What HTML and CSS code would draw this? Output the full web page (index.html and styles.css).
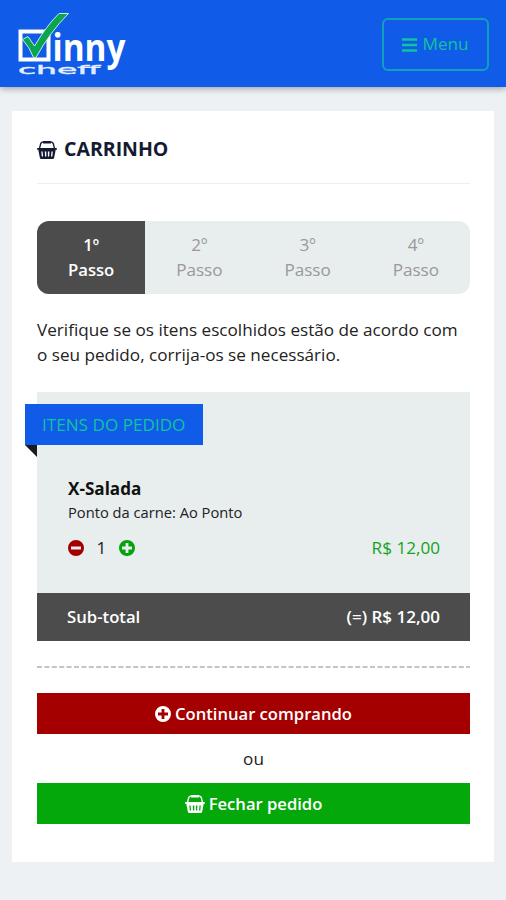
FILE: index.html
```html
<!DOCTYPE html>
<html lang="pt-BR">
<head>
<meta charset="utf-8">
<meta name="viewport" content="width=device-width, initial-scale=1">
<title>Vinny Cheff - Carrinho</title>
<link rel="stylesheet" href="styles.css">
</head>
<body>
<svg class="sprite" aria-hidden="true">
  <symbol id="basket" viewBox="0 0 20 18">
    <path d="M2.500 7.500L3.600 3Q4.100 .8 6.500 .8h7q2.400 0 2.900 2.200l1.100 4.500" fill="none" stroke="currentColor" stroke-width="1.300"/>
    <path d="M6 1.300h8" stroke="currentColor" stroke-width="2.400"/>
    <path fill="currentColor" fill-rule="evenodd" d="M.8 7h18.400q.8 0 .8.9t-.8.9h-.5L17.200 16.500Q17 18 15.500 18h-11Q3 18 2.800 16.500L1.300 8.800H.8Q0 8.800 0 7.900T.8 7zM4.300 10.500l.5 5h1.300l-.5-5zM7.800 10.500l.2 5h1.300v-5zM10.900 10.500v5h1.300l.2-5zM14.500 10.500l-.5 5h1.300l.5-5z"/>
  </symbol>
  <symbol id="plus" viewBox="0 0 16 16">
    <path fill="currentColor" fill-rule="evenodd" d="M8 0a8 8 0 1 0 0 16A8 8 0 1 0 8 0zM6.600 3h2.800v3.600H13v2.800H9.400V13H6.600V9.400H3V6.600h3.600z"/>
  </symbol>
  <symbol id="minus" viewBox="0 0 16 16">
    <path fill="currentColor" fill-rule="evenodd" d="M8 0a8 8 0 1 0 0 16A8 8 0 1 0 8 0zM3 6.600h10v2.800H3z"/>
  </symbol>
</svg>
<header class="topbar">
  <svg class="logo" viewBox="0 0 112 68" role="img" aria-label="Vinny cheff">
    <rect x="4.500" y="22.500" width="28" height="28" fill="none" stroke="#fff" stroke-width="4"/>
    <path d="M6.500 30.500L12 27.500l6.500 9.500Q31 16 43 4.500H52.500Q34 23 20 48.500h-2.500Q13.500 38 6.500 30.500z" fill="#0aa64f" stroke="#cfe9e6" stroke-width="1"/>
    <text class="logo-name" x="36.500" y="51.500" textLength="73" lengthAdjust="spacingAndGlyphs">inny</text>
    <g transform="translate(2 64.500) scale(2.050 1)"><text class="logo-sub" x="0" y="0" textLength="40" lengthAdjust="spacingAndGlyphs">cheff</text></g>
  </svg>
  <button class="menu" type="button">
    <svg class="bars" viewBox="0 0 15 14"><path d="M0 1.500h15M0 7h15M0 12.500h15" stroke="currentColor" stroke-width="2.500"/></svg>
    <span>Menu</span>
  </button>
</header>
<main class="card">
  <h1 class="title"><svg class="basket"><use href="#basket"/></svg><span>CARRINHO</span></h1>
  <ol class="steps">
    <li class="step active">1º<br>Passo</li>
    <li class="step">2º<br>Passo</li>
    <li class="step">3º<br>Passo</li>
    <li class="step">4º<br>Passo</li>
  </ol>
  <p class="intro">Verifique se os itens escolhidos estão de acordo com<br>o seu pedido, corrija-os se necessário.</p>
  <section class="order">
    <h2 class="ribbon">ITENS DO PEDIDO</h2>
    <div class="item">
      <h3 class="name">X-Salada</h3>
      <p class="detail">Ponto da carne: Ao Ponto</p>
      <div class="line">
        <div class="qty">
          <svg class="round less"><use href="#minus"/></svg>
          <span>1</span>
          <svg class="round more"><use href="#plus"/></svg>
        </div>
        <span class="price">R$ 12,00</span>
      </div>
    </div>
    <div class="subtotal"><span>Sub-total</span><span class="total">(=) R$ 12,00</span></div>
  </section>
  <svg class="dashes"><line x1="0" y1="1" x2="433" y2="1" stroke="#c4c4c4" stroke-width="2" stroke-dasharray="5 2.400"/></svg>
  <button class="btn red" type="button"><svg class="round"><use href="#plus"/></svg><span>Continuar comprando</span></button>
  <p class="or">ou</p>
  <button class="btn green" type="button"><svg class="basket"><use href="#basket"/></svg><span>Fechar pedido</span></button>
</main>
</body>
</html>
```
FILE: styles.css
```css
* { box-sizing: border-box; }
body {
  margin: 0;
  min-height: 900px;
  background: #edf1f4;
  color: #222;
  font: 17.140px/24.600px "Open Sans", "Noto Sans", sans-serif;
}
h1, h2, h3, p, ol { margin: 0; padding: 0; }
svg { display: block; flex: none; }
button { font: inherit; }
.sprite { position: absolute; width: 0; height: 0; }
.topbar {
  display: flex;
  justify-content: space-between;
  height: 87px;
  padding: 9px 17px 0 16px;
  background: #105be7;
  box-shadow: 0 1px 7px rgba(0, 0, 0, .4);
}
.logo { width: 112px; height: 68px; overflow: visible; }
.logo-name { font: 700 37px "Open Sans", sans-serif; fill: #fff; }
.logo-sub { font: 400 12px "DejaVu Sans", sans-serif; fill: #e4ecff; stroke: #e4ecff; stroke-width: .4px; }
.menu {
  display: flex;
  align-items: center;
  justify-content: center;
  gap: 5px;
  width: 107px;
  height: 53px;
  margin-top: 9px;
  padding: 0;
  border: 2px solid #12a0bf;
  border-radius: 6px;
  background: none;
  color: #10c49c;
}
.bars { width: 15px; height: 14px; }
.card {
  width: 482px;
  height: 751px;
  margin: 24px 0 0 12px;
  padding: 25px;
  background: #fff;
}
.title {
  display: flex;
  align-items: center;
  gap: 7px;
  width: 433px;
  height: 48px;
  padding-bottom: 20px;
  border-bottom: 1px solid #eee;
  color: #141a30;
  font-size: 19.500px;
  font-weight: 700;
}
.basket { width: 20px; height: 18px; }
.steps {
  display: grid;
  grid-template-columns: repeat(4, 1fr);
  width: 433px;
  height: 73px;
  margin-top: 37px;
  overflow: hidden;
  border-radius: 12px;
  background: #e8edee;
  list-style: none;
}
.step { padding-top: 12px; color: #999; text-align: center; }
.step.active { background: #4c4c4c; color: #fff; font-size: 16.700px; font-weight: 600; }
.intro { margin-top: 24px; white-space: nowrap; }
.order {
  width: 433px;
  height: 249px;
  margin-top: 25px;
  padding-top: 12px;
  background: #e8edee;
}
.ribbon {
  position: relative;
  width: 178px;
  height: 41px;
  margin-left: -12px;
  padding-left: 17px;
  background: #105be7;
  color: #10c49c;
  font-size: 17.140px;
  font-weight: 400;
  line-height: 41px;
  white-space: nowrap;
}
.ribbon::after {
  content: "";
  position: absolute;
  top: 41px;
  left: 0;
  border-top: 12px solid #1b1b1b;
  border-left: 12px solid transparent;
}
.item { height: 148px; padding: 32px 30px 0 31px; }
.name { color: #111; font-size: 17.100px; font-weight: 700; }
.detail { font-size: 14.700px; line-height: 20px; }
.line { display: flex; justify-content: space-between; align-items: center; margin-top: 14px; }
.qty { display: flex; align-items: center; gap: 12.500px; }
.round { width: 16px; height: 16px; }
.less { color: #a40000; }
.more { color: #05a30b; }
.price { color: #13a31c; }
.subtotal {
  display: flex;
  justify-content: space-between;
  height: 48px;
  padding: 0 30px;
  background: #4c4c4c;
  color: #fff;
  font-size: 16.700px;
  font-weight: 600;
  line-height: 48px;
}
.total { font-size: 17px; }
.dashes { width: 433px; height: 2px; margin: 25px 0; }
.btn {
  display: flex;
  align-items: center;
  justify-content: center;
  gap: 4px;
  width: 433px;
  height: 41px;
  padding: 1px 0 0;
  border: 0;
  color: #fff;
  font-size: 16.600px;
  font-weight: 600;
}
.red { background: #a40000; }
.green { background: #05a80a; }
.or { width: 433px; height: 49px; line-height: 49px; text-align: center; }
```
